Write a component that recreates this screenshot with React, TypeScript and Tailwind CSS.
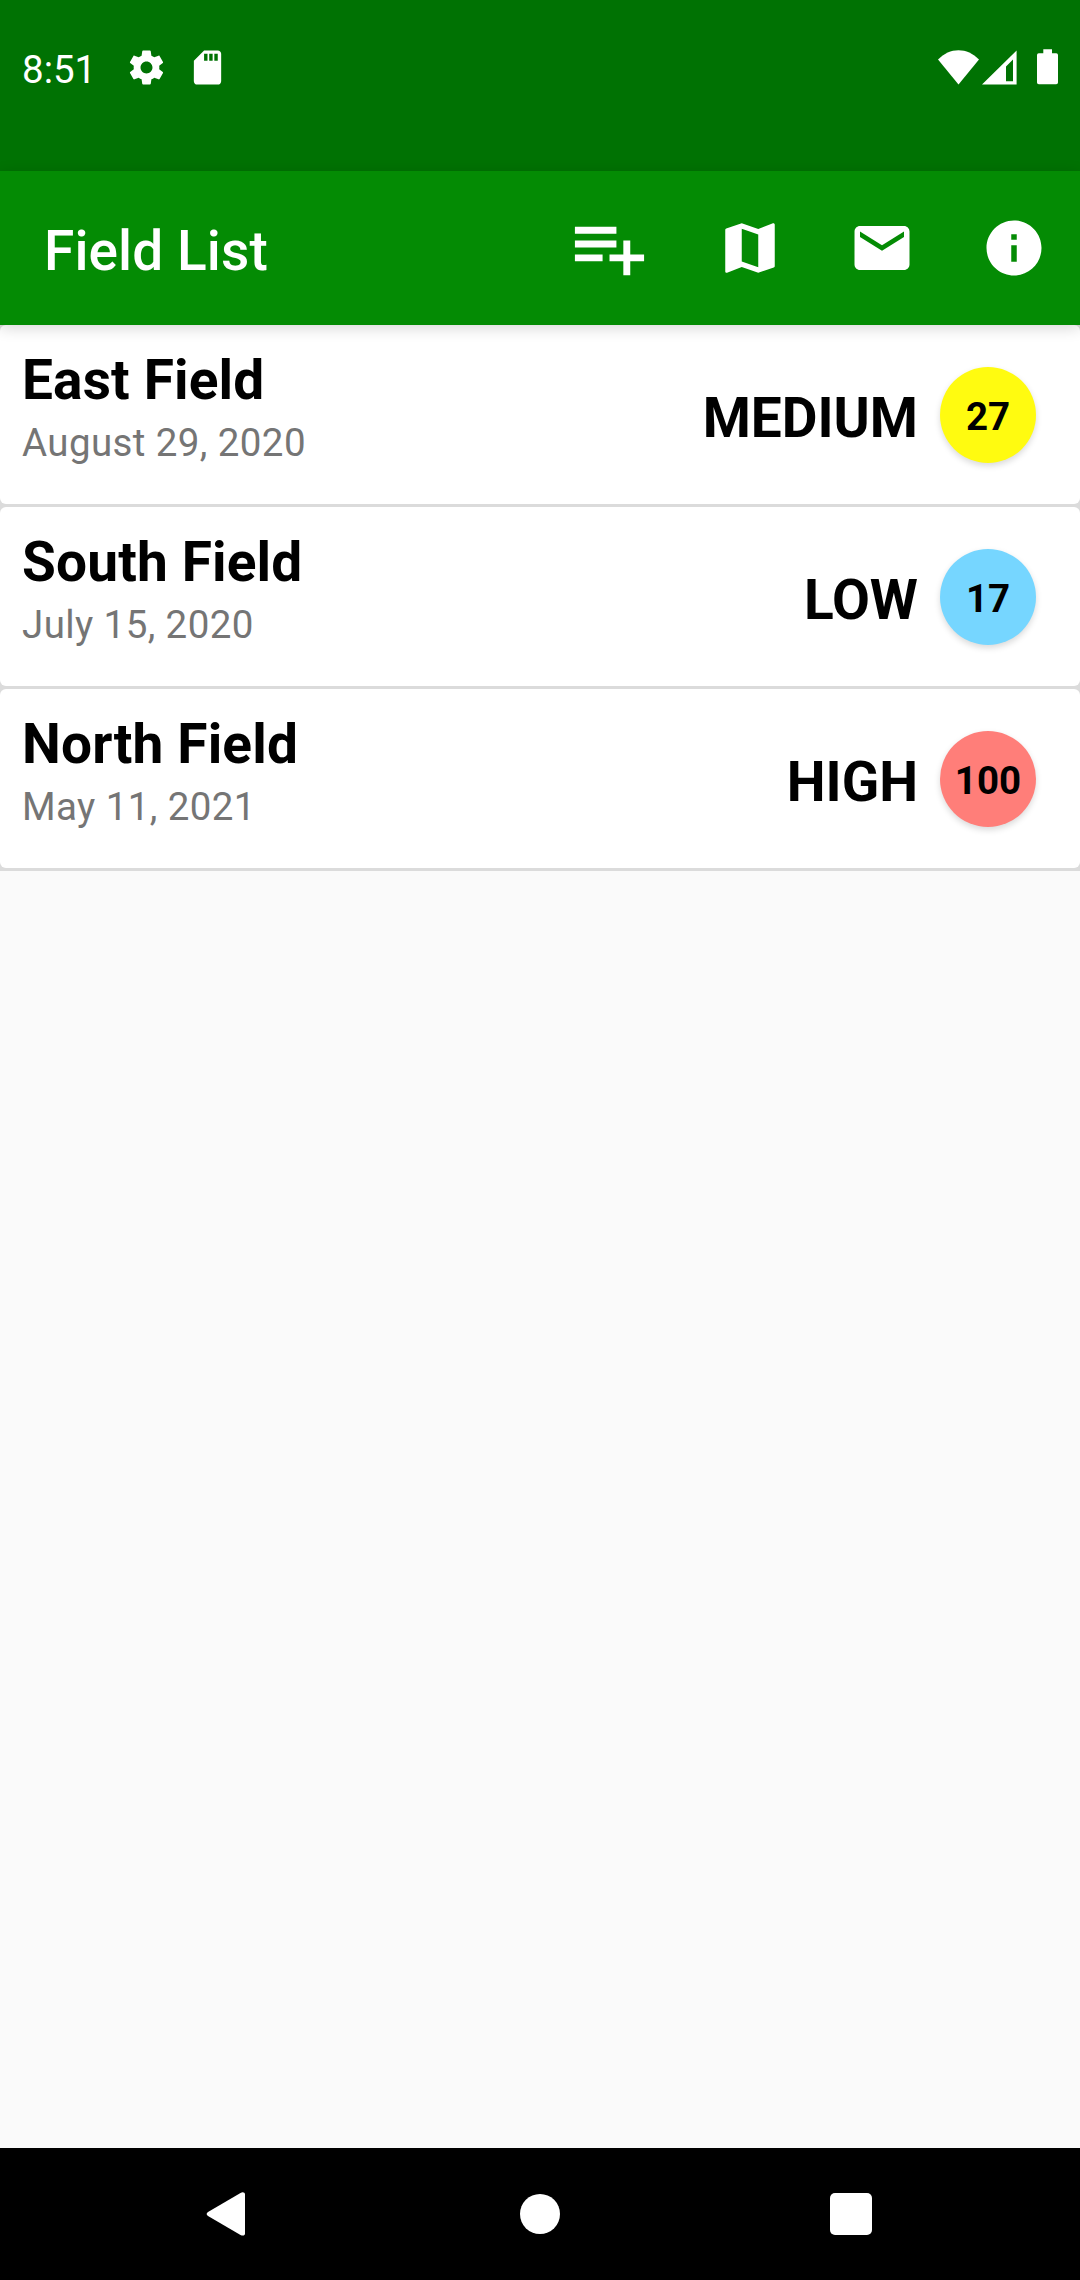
import React from 'react';

interface Field {
  name: string;
  date: string;
  level: string;
  score: number;
  color: string;
}

const fields: Field[] = [
  { name: 'East Field', date: 'August 29, 2020', level: 'MEDIUM', score: 27, color: 'bg-[#fffb10]' },
  { name: 'South Field', date: 'July 15, 2020', level: 'LOW', score: 17, color: 'bg-[#76d6ff]' },
  { name: 'North Field', date: 'May 11, 2021', level: 'HIGH', score: 100, color: 'bg-[#ff7e79]' },
];

const StatusBar: React.FC = () => (
  <div className="flex h-[171px] items-start bg-[#007203] pl-[22px] pr-[21px] text-white">
    <div className="mt-[47px] w-[104px] text-[38.5px] leading-[46px]">8:51</div>
    <svg className="mt-[47px] h-[41px] w-[41px]" viewBox="0 0 24 24" fill="currentColor">
      <path d="M19.43 12.98c.04-.32.07-.64.07-.98s-.03-.66-.07-.98l2.11-1.65c.19-.15.24-.42.12-.64l-2-3.46c-.12-.22-.39-.3-.61-.22l-2.49 1c-.52-.4-1.08-.73-1.69-.98l-.38-2.65C14.46 2.18 14.25 2 14 2h-4c-.25 0-.46.18-.49.42l-.38 2.65c-.61.25-1.17.59-1.69.98l-2.49-1c-.23-.09-.49 0-.61.22l-2 3.46c-.13.22-.07.49.12.64l2.11 1.65c-.04.32-.07.65-.07.98s.03.66.07.98l-2.11 1.65c-.19.15-.24.42-.12.64l2 3.46c.12.22.39.3.61.22l2.49-1c.52.4 1.08.73 1.69.98l.38 2.65c.03.24.24.42.49.42h4c.25 0 .46-.18.49-.42l.38-2.65c.61-.25 1.17-.59 1.69-.98l2.49 1c.23.09.49 0 .61-.22l2-3.46c.12-.22.07-.49-.12-.64l-2.11-1.65zM12 15.5c-1.93 0-3.5-1.57-3.5-3.5s1.57-3.5 3.5-3.5 3.5 1.57 3.5 3.5-1.57 3.5-3.5 3.5z" />
    </svg>
    <svg className="ml-5 mt-[47px] h-[41px] w-[41px]" viewBox="0 0 24 24" fill="currentColor">
      <path d="M18 2h-8L4.02 8 4 20c0 1.1.9 2 2 2h12c1.1 0 2-.9 2-2V4c0-1.1-.9-2-2-2zm-6 6h-2V4h2v4zm3 0h-2V4h2v4zm3 0h-2V4h2v4z" />
    </svg>
    <svg className="ml-auto mt-[49px] h-9 w-[42px]" viewBox="0 0 42 36" fill="currentColor">
      <path d="M20.5 35.5 0 10.6C6 4.5 13 1.300 20.500 1.300S35 4.500 41 10.600Z" />
    </svg>
    <svg className="ml-[2px] mt-[49px] h-9 w-9" viewBox="0 0 36 36" fill="currentColor" fillRule="evenodd">
      <path d="M0 35.500 34.600 1.500V35.500ZM24 32.200H31V10.500L24 17.500Z" />
    </svg>
    <svg className="ml-[19px] mt-[49px] h-9 w-[22px]" viewBox="0 0 22 36" fill="currentColor">
      <path d="M6.300 .3h8.700v4h4.200q1.800 0 1.800 1.800v27.400q0 1.800-1.800 1.800H1.800Q0 35.300 0 33.500V6.100Q0 4.300 1.800 4.300h4.500z" />
    </svg>
  </div>
);

const Toolbar: React.FC = () => (
  <header className="relative z-10 flex h-[154px] items-center bg-[#048b04] pl-[44px] pr-[33px] text-white shadow-[0_3px_14px_rgba(0,0,0,0.16)]">
    <h1 className="mr-auto pt-[6px] text-[55px] font-medium leading-[64px] tracking-[0.1px]">Field List</h1>
    <div className="flex items-center gap-[66px]">
      <svg className="mb-[2px] h-[83px] w-[83px]" viewBox="0 0 24 24" fill="currentColor">
        <path d="M14 10H2v2h12v-2zm0-4H2v2h12V6zm4 8v-4h-2v4h-4v2h4v4h2v-4h4v-2h-4zM2 16h8v-2H2v2z" />
      </svg>
      <svg className="h-[66px] w-[66px]" viewBox="0 0 24 24" fill="currentColor">
        <path d="M20.5 3l-.16.03L15 5.1 9 3 3.36 4.9c-.21.07-.36.25-.36.48V20.5c0 .28.22.5.5.5l.16-.03L9 18.9l6 2.1 5.640-1.900c.21-.07.36-.25.36-.48V3.500c0-.28-.22-.5-.5-.5zM15 19l-6-2.110V5l6 2.110V19z" />
      </svg>
      <svg className="h-[66px] w-[66px]" viewBox="0 0 24 24" fill="currentColor">
        <path d="M20 4H4c-1.100 0-1.990.9-1.990 2L2 18c0 1.100.9 2 2 2h16c1.100 0 2-.9 2-2V6c0-1.100-.9-2-2-2zm0 4l-8 5-8-5V6l8 5 8-5v2z" />
      </svg>
      <svg className="h-[66px] w-[66px]" viewBox="0 0 24 24" fill="currentColor">
        <path d="M12 2C6.480 2 2 6.480 2 12s4.480 10 10 10 10-4.480 10-10S17.520 2 12 2zm1 15h-2v-6h2v6zm0-8h-2V7h2v2z" />
      </svg>
    </div>
  </header>
);

const FieldCard: React.FC<{ field: Field }> = ({ field }) => (
  <li className="flex h-[179px] items-start rounded-[6px] bg-white pl-[22px] pr-[44px]">
    <div className="mr-auto pt-[23px]">
      <h2 className="text-[55px] font-bold leading-[64px] tracking-[0.15px] text-black">{field.name}</h2>
      <p className="mt-[8px] text-[38.5px] leading-[46px] tracking-[0.4px] text-[#757575]">{field.date}</p>
    </div>
    <div className="mr-[22px] mt-[61px] text-[55px] font-bold leading-[64px] text-black">{field.level}</div>
    <div className={`mt-[42px] flex h-[96px] w-[96px] items-center justify-center rounded-full pt-[3px] text-[38.5px] font-bold leading-[46px] text-black shadow-[0_3px_6px_rgba(0,0,0,0.15)] ${field.color}`}>
      {field.score}
    </div>
  </li>
);

const NavigationBar: React.FC = () => (
  <nav className="flex h-[132px] items-center justify-between bg-black pl-[206px] pr-[208px] text-white">
    <svg className="h-[46px] w-[40px]" viewBox="0 0 40 46" fill="currentColor">
      <path d="M34.5 1.900C36.800 .6 39 1.400 39 3.600V42.400C39 44.600 36.800 45.200 34.500 43.900L2 25.100C.2 23.900 .2 22.300 2 21.100Z" />
    </svg>
    <div className="ml-[4px] h-[40px] w-[40px] rounded-full bg-white" />
    <div className="h-[42px] w-[42px] rounded-[5px] bg-white" />
  </nav>
);

const App: React.FC = () => {
  return (
    <div className="flex h-[2280px] w-[1080px] flex-col bg-[#fafafa] font-['Roboto',sans-serif]">
      <StatusBar />
      <Toolbar />
      <main className="grow">
        <ul className="flex flex-col gap-[3px] bg-[#dbdbdb] pb-[3px]">
          {fields.map((field) => (
            <FieldCard key={field.name} field={field} />
          ))}
        </ul>
      </main>
      <NavigationBar />
    </div>
  );
};

export default App;
